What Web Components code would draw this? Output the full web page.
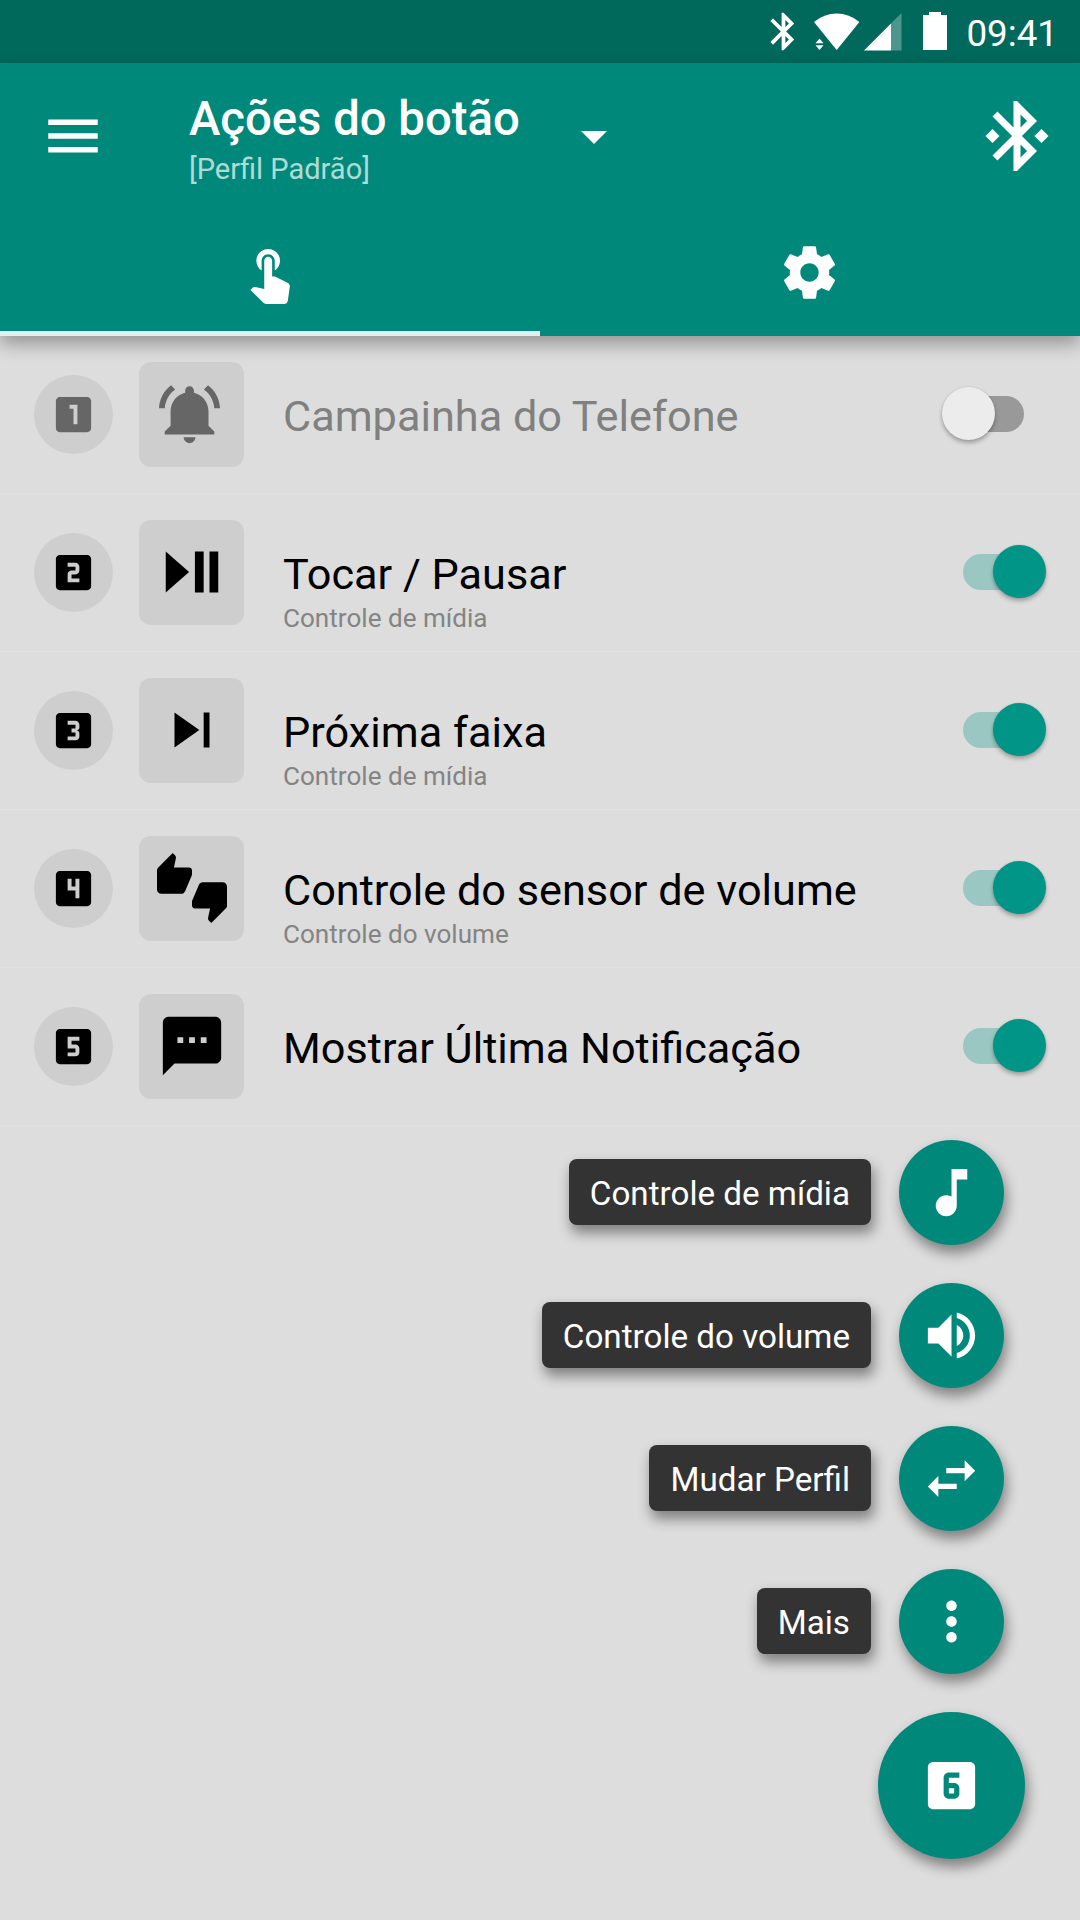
<!DOCTYPE html>
<html lang="pt">
<head>
<meta charset="utf-8">
<title>Ações do botão</title>
<style>
html,body{margin:0;padding:0;background:#ddd}
body{width:1080px;height:1920px;overflow:hidden;font-family:Roboto,"Noto Sans",sans-serif}
</style>
</head>
<body>
<app-screen></app-screen>
<script>
const BOX = 'M19 3H5c-1.1 0-2 .9-2 2v14c0 1.1.9 2 2 2h14c1.1 0 2-.9 2-2V5c0-1.1-.9-2-2-2z';
const BT = 'M17.71 7.71L12 2h-1v7.59L6.41 5 5 6.41 10.59 12 5 17.59 6.41 19 11 14.41V22h1l5.71-5.71-4.3-4.29 4.3-4.29zM13 5.83l1.88 1.88L13 9.59V5.83zm1.88 10.46L13 18.17v-3.76l1.88 1.88z';
const ICONS = {
  menu: 'M3 18h18v-2H3v2zm0-5h18v-2H3v2zm0-7v2h18V6H3z',
  bluetooth: BT,
  'bluetooth-connected': BT + 'M7 12l-2-2-2 2 2 2 2-2zM19 10l-2 2 2 2 2-2-2-2z',
  touch: 'M9 11.24V7.5C9 6.12 10.12 5 11.5 5S14 6.12 14 7.5v3.74c1.21-.81 2-2.18 2-3.74C16 5.01 13.99 3 11.5 3S7 5.01 7 7.5c0 1.56.79 2.93 2 3.74zm9.84 4.63l-4.54-2.26c-.17-.07-.35-.11-.54-.11H13v-6c0-.83-.67-1.5-1.5-1.5S10 6.67 10 7.5v10.74l-3.43-.72c-.08-.01-.15-.03-.24-.03-.31 0-.59.13-.79.33l-.79.8 4.94 4.94c.27.27.65.44 1.06.44h6.79c.75 0 1.33-.55 1.44-1.28l.75-5.27c.01-.07.02-.14.02-.2 0-.62-.38-1.16-.91-1.38z',
  gear: 'M19.43 12.98c.04-.32.07-.64.07-.98s-.03-.66-.07-.98l2.11-1.65c.19-.15.24-.42.12-.64l-2-3.46c-.12-.22-.39-.3-.61-.22l-2.49 1c-.52-.4-1.08-.73-1.69-.98l-.38-2.65C14.46 2.18 14.25 2 14 2h-4c-.25 0-.46.18-.49.42l-.38 2.65c-.61.25-1.17.59-1.69.98l-2.49-1c-.23-.09-.49 0-.61.22l-2 3.46c-.13.22-.07.49.12.64l2.11 1.65c-.04.32-.07.65-.07.98s.03.66.07.98l-2.11 1.65c-.19.15-.24.42-.12.64l2 3.46c.12.22.39.3.61.22l2.49-1c.52.4 1.08.73 1.69.98l.38 2.65c.03.24.24.42.49.42h4c.25 0 .46-.18.49-.42l.38-2.65c.61-.25 1.17-.59 1.69-.98l2.49 1c.23.09.49 0 .61-.22l2-3.46c.12-.22.07-.49-.12-.64l-2.11-1.65zM12 15.5c-1.93 0-3.5-1.57-3.5-3.5s1.57-3.5 3.5-3.5 3.5 1.57 3.5 3.5-1.57 3.5-3.5 3.5z',
  bell: 'M6.58 3.58L5.15 2.15C2.76 3.97 1.18 6.8 1.03 10h2c.15-2.65 1.51-4.97 3.55-6.42zM19.97 10h2c-.15-3.2-1.73-6.03-4.13-7.85l-1.43 1.43c2.03 1.45 3.41 3.77 3.56 6.42zm-1.97 1c0-3.07-2.13-5.64-5-6.32V4c0-.83-.67-1.5-1.5-1.5S10 3.17 10 4v.68c-2.87.68-5 3.25-5 6.32v5l-2 2v1h17v-1l-2-2v-5zm-6.5 11c.14 0 .27-.01.4-.04.65-.13 1.19-.58 1.44-1.18.1-.24.16-.5.16-.78h-4c0 1.1.9 2 2 2z',
  'play-pause': 'M3 5v14l8-7zM13 19h3V5h-3zM18 5v14h3V5z',
  next: 'M6 18l8.5-6L6 6v12zM16 6v12h2V6h-2z',
  thumbs: 'M12 6c0-.55-.45-1-1-1H5.82l.66-3.18.02-.23c0-.31-.13-.59-.33-.8L5.38 0 .44 4.94C.17 5.21 0 5.59 0 6v6.5c0 .83.67 1.5 1.5 1.5h6.75c.62 0 1.15-.38 1.38-.91l2.26-5.29c.07-.17.11-.36.11-.55V6zm10.5 4h-6.75c-.62 0-1.15.38-1.38.91l-2.26 5.29c-.07.17-.11.36-.11.55V18c0 .55.45 1 1 1h5.18l-.66 3.18-.02.24c0 .31.13.59.33.8l.79.78 4.94-4.94c.27-.27.44-.65.44-1.06v-6.5c0-.83-.67-1.5-1.5-1.5z',
  sms: 'M20 2H4c-1.1 0-1.99.9-1.99 2L2 22l4-4h14c1.1 0 2-.9 2-2V4c0-1.1-.9-2-2-2zM9 11H7V9h2v2zm4 0h-2V9h2v2zm4 0h-2V9h2v2z',
  'box-1': BOX + 'm-5 14h-2V9h-2V7h4v10z',
  'box-2': BOX + 'm-4 8c0 1.11-.9 2-2 2h-2v2h4v2H9v-4c0-1.11.9-2 2-2h2V9H9V7h4c1.1 0 2 .89 2 2v2z',
  'box-3': BOX + 'm-4 7.5c0 .83-.67 1.5-1.5 1.5.83 0 1.5.67 1.5 1.5V15c0 1.11-.9 2-2 2H9v-2h4v-2h-2v-2h2V9H9V7h4c1.1 0 2 .89 2 2v1.5z',
  'box-4': BOX + 'm-4 14h-2v-4H9V7h2v4h2V7h2v10z',
  'box-5': BOX + 'm-4 6h-4v2h2c1.1 0 2 .89 2 2v2c0 1.11-.9 2-2 2H9v-2h4v-2H9V7h6v2z',
  'box-6': 'M11 15h2v-2h-2v2z' + BOX + 'm-4 6h-4v2h2c1.1 0 2 .89 2 2v2c0 1.11-.9 2-2 2h-2c-1.1 0-2-.89-2-2V9c0-1.11.9-2 2-2h4v2z',
  note: 'M12 3v10.55c-.59-.34-1.27-.55-2-.55-2.21 0-4 1.79-4 4s1.79 4 4 4 4-1.79 4-4V7h4V3h-6z',
  volume: 'M3 9v6h4l5 5V4L7 9H3zm13.5 3c0-1.77-1.02-3.29-2.5-4.03v8.05c1.48-.73 2.5-2.25 2.5-4.02zM14 3.23v2.06c2.89.86 5 3.54 5 6.71s-2.11 5.85-5 6.71v2.06c4.01-.91 7-4.49 7-8.77s-2.99-7.86-7-8.77z',
  swap: 'M6.99 11L3 15l3.99 4v-3H14v-2H6.99v-3zM21 9l-3.99-4v3H10v2h7.01v3L21 9z',
  more: 'M12 8c1.1 0 2-.9 2-2s-.9-2-2-2-2 .9-2 2 .9 2 2 2zm0 2c-1.1 0-2 .9-2 2s.9 2 2 2 2-.9 2-2-.9-2-2-2zm0 6c-1.1 0-2 .9-2 2s.9 2 2 2 2-.9 2-2-.9-2-2-2z'
};

class Base extends HTMLElement {
  connectedCallback() {
    if (this.shadowRoot) return;
    this.attachShadow({ mode: 'open' }).innerHTML = this.render();
  }
  attr(name) { return this.getAttribute(name) || ''; }
}

customElements.define('md-icon', class extends Base {
  render() {
    return `<style>:host{display:block;flex:none;width:var(--size,63px);height:var(--size,63px)}
      svg{display:block;width:100%;height:100%;fill:currentColor}</style>
      <svg viewBox="0 0 24 24" fill-rule="evenodd"><path d="${ICONS[this.attr('name')]}"/></svg>`;
  }
});

customElements.define('status-bar', class extends Base {
  render() {
    return `<style>
      :host{display:flex;flex:none;height:63px;box-sizing:border-box;background:#00695c;color:#fff;align-items:center;justify-content:flex-end;padding-right:22px}
      md-icon{--size:45px;margin-right:8px}
      svg{display:block;fill:#fff}
      .time{font-size:36.75px;line-height:63px;margin:4px 0 0 18.6px}
      </style>
      <md-icon name="bluetooth"></md-icon>
      <svg width="134" height="63" viewBox="814 0 134 63">
        <path d="M814 22Q824 13.5 836.7 13.5T859.4 22L836.7 50z"/>
        <path d="M815.5 43.3h8L819.5 38.6zM815.5 45.3h8L819.5 50z"/>
        <path d="M891 23.5L901.5 13V50.5H891z" opacity=".3"/>
        <path d="M864 50.5L891 23.5V50.5z"/>
        <path d="M923 15h6v-3h12v3h6v35h-24z"/>
      </svg>
      <span class="time">09:41</span>`;
  }
});

customElements.define('app-bar', class extends Base {
  render() {
    return `<style>
      :host{display:block;flex:none;height:273px;background:#00897b;color:#fff;position:relative;z-index:1;box-shadow:0 8px 17px rgba(0,0,0,.33)}
      .tool{display:flex;height:147px;align-items:center;box-sizing:border-box;padding:0 21px 0 40px}
      .menu{--size:66px;margin-bottom:1px}
      .titles{margin-left:83px;height:147px;padding-top:28px;box-sizing:border-box}
      .t{font-size:47.25px;font-weight:500;line-height:56px;white-space:nowrap}
      .s{font-size:29px;line-height:36px;color:rgba(255,255,255,.7);margin-top:4px;white-space:nowrap}
      .arrow{width:0;height:0;border:13px solid transparent;border-top-color:#fff;border-bottom:0;margin-left:61px;margin-top:2px}
      .bt{--size:84px;margin:0 0 1px auto}
      .tabs{display:flex;height:126px}
      .tab{flex:1;display:flex;align-items:center;justify-content:center;box-sizing:border-box;padding:4px 1px 0 0;border-bottom:5px solid transparent}
      .on{border-color:#dff1ef}
      </style>
      <div class="tool">
        <md-icon class="menu" name="menu"></md-icon>
        <div class="titles"><div class="t">Ações do botão</div><div class="s">[Perfil Padrão]</div></div>
        <div class="arrow"></div>
        <md-icon class="bt" name="bluetooth-connected"></md-icon>
      </div>
      <div class="tabs">
        <div class="tab on"><md-icon name="touch"></md-icon></div>
        <div class="tab"><md-icon name="gear"></md-icon></div>
      </div>`;
  }
});

customElements.define('md-switch', class extends Base {
  render() {
    return `<style>
      :host{display:flex;align-items:center;width:61px;height:36px;border-radius:18px;background:#999;flex:none;margin-bottom:1px}
      i{display:block;flex:none;width:53px;height:53px;border-radius:50%;background:#ececec;margin:-1px 0 0 -21px;box-shadow:0 3px 4px rgba(0,0,0,.28),0 0 2px rgba(0,0,0,.12)}
      :host([on]){background:#9bc7c3}
      :host([on]) i{background:#009587;margin-left:30px}
      </style><i></i>`;
  }
});

customElements.define('action-row', class extends Base {
  render() {
    return `<style>
      :host{display:flex;align-items:center;height:158px;box-sizing:border-box;border-bottom:1px solid #e1e1e1;padding:0 56.5px 0 34px;color:#000}
      .num{display:flex;align-items:center;justify-content:center;width:79px;height:79px;border-radius:50%;background:#cecece;--size:47px}
      .ico{display:flex;align-items:center;justify-content:center;width:105px;height:105px;box-sizing:border-box;padding:0 0 1px 0;border-radius:12px;background:#cecece;margin-left:26px;--size:70px}
      :host([off]) .ico{padding-right:1px}
      .txt{margin-left:39px;flex:1;white-space:nowrap;height:100px;}
      .t{font-size:43.25px;line-height:50px;padding-top:27px}
      .s{font-size:26.1px;line-height:32px;color:#848484;margin-top:2px}
      :host([off]) md-icon{color:#666}
      :host([off]) .t{color:#808080}
      </style>
      <div class="num"><md-icon name="box-${this.attr('n')}"></md-icon></div>
      <div class="ico"><md-icon name="${this.attr('icon')}"></md-icon></div>
      <div class="txt"><div class="t"><slot></slot></div><div class="s"><slot name="sub"></slot></div></div>
      <md-switch ${this.hasAttribute('off') ? '' : 'on'}></md-switch>`;
  }
});

customElements.define('fab-item', class extends Base {
  render() {
    return `<style>
      :host{display:flex;align-items:center;justify-content:flex-end;gap:28px;padding-right:21px}
      .label,.fab{box-shadow:2.6px 7.9px 13px rgba(0,0,0,.42)}
      .label{background:#333;color:#fff;font-size:33.2px;line-height:70px;height:66px;padding:0 21px;margin-bottom:1px;border-radius:8px;white-space:nowrap}
      .fab{display:flex;align-items:center;justify-content:center;width:105px;height:105px;border-radius:50%;background:#00897b;color:#fff}
      :host([main]){padding-right:0}
      :host([main]) .label{display:none}
      :host([main]) .fab{width:147px;height:147px}
      </style>
      <div class="label"><slot></slot></div>
      <div class="fab"><md-icon name="${this.attr('icon')}"></md-icon></div>`;
  }
});

customElements.define('app-screen', class extends Base {
  render() {
    return `<style>
      :host{display:flex;flex-direction:column;width:1080px;height:1920px;background:#ddd}
      .fabs{display:flex;flex-direction:column;gap:38px;padding:14px 55px 0 0}
      </style>
      <status-bar></status-bar>
      <app-bar></app-bar>
      <div class="list">
        <action-row n="1" icon="bell" off>Campainha do Telefone</action-row>
        <action-row n="2" icon="play-pause">Tocar / Pausar<span slot="sub">Controle de mídia</span></action-row>
        <action-row n="3" icon="next">Próxima faixa<span slot="sub">Controle de mídia</span></action-row>
        <action-row n="4" icon="thumbs">Controle do sensor de volume<span slot="sub">Controle do volume</span></action-row>
        <action-row n="5" icon="sms">Mostrar Última Notificação</action-row>
      </div>
      <div class="fabs">
        <fab-item icon="note">Controle de mídia</fab-item>
        <fab-item icon="volume">Controle do volume</fab-item>
        <fab-item icon="swap">Mudar Perfil</fab-item>
        <fab-item icon="more">Mais</fab-item>
        <fab-item icon="box-6" main></fab-item>
      </div>`;
  }
});
</script>
</body>
</html>
